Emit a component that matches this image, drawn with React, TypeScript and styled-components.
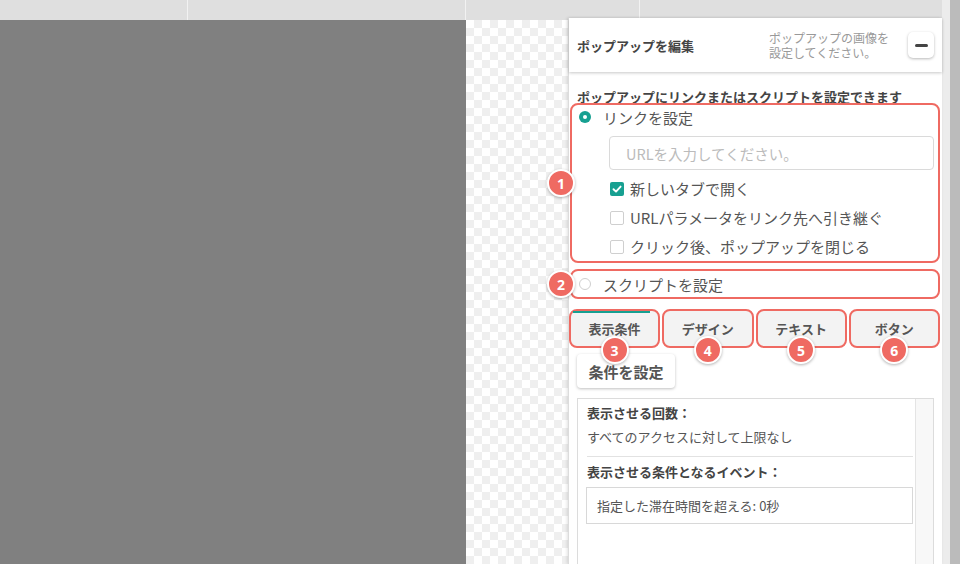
import styled, { createGlobalStyle, css } from "styled-components";

const GlobalStyle = createGlobalStyle`
  html, body {
    margin: 0;
    padding: 0;
    overflow: hidden;
  }
  body {
    font-family: "Noto Sans CJK JP", "Noto Sans", sans-serif;
    color: #555;
  }
  * {
    box-sizing: border-box;
  }
`;

const RED = "#ef6a62";
const TEAL = "#17a091";

const Page = styled.div`
  display: flex;
  width: 960px;
  height: 564px;
  overflow: hidden;
`;

const Workspace = styled.div`
  display: flex;
  flex-direction: column;
  width: 942px;
`;

const TopBar = styled.div`
  display: flex;
  height: 20px;
  background: #dfdfdf;
`;

const TopSegment = styled.div<{ w: number }>`
  width: ${(p) => p.w}px;
  border-right: 1px solid #f2f2f2;
  &:last-child {
    flex: 1;
    border-right: none;
  }
`;

const Main = styled.div`
  display: flex;
  flex: 1;
  min-height: 0;
`;

const Canvas = styled.div`
  width: 466px;
  background: #808080;
`;

const Checker = styled.div`
  flex: 1;
  display: flex;
  padding-left: 102px;
  background: conic-gradient(#efefef 25%, #fff 0 50%, #efefef 0 75%, #fff 0) 0 0 / 16px 16px;
`;

const ScrollStrip = styled.div`
  width: 8px;
  background: #ececec;
`;

const ScrollEdge = styled.div`
  width: 10px;
  background: #bbbbbb;
`;

const Panel = styled.div`
  position: relative;
  z-index: 1;
  margin-top: -2px;
  width: 374px;
  background: #fff;
  border-left: 1px solid #dcdcdc;
  box-shadow: -1px 0 3px rgba(0, 0, 0, 0.12);
  display: flex;
  flex-direction: column;
`;

const Header = styled.div`
  display: flex;
  align-items: center;
  height: 54px;
  padding: 0 8px 0 8px;
  box-shadow: 0 1px 3px rgba(0, 0, 0, 0.22);
`;

const Title = styled.div`
  flex: 1;
  font-size: 13px;
  font-weight: 700;
  color: #444;
`;

const HeaderNote = styled.div`
  font-size: 12px;
  line-height: 15px;
  color: #999;
  margin-right: 19px;
`;

const MinusButton = styled.button`
  width: 26px;
  height: 26px;
  border: none;
  border-radius: 5px;
  background: #fff;
  box-shadow: 0 1px 3px rgba(0, 0, 0, 0.28);
  display: flex;
  align-items: center;
  justify-content: center;
  padding: 0;
  &::after {
    content: "";
    width: 13px;
    height: 3px;
    border-radius: 2px;
    background: #444;
  }
`;

const Body = styled.div`
  flex: 1;
  display: flex;
  flex-direction: column;
  padding: 17px 8px 0 8px;
  min-height: 0;
`;

const Intro = styled.div`
  font-size: 13px;
  line-height: 15px;
  font-weight: 700;
  color: #444;
  margin-bottom: -1px;
`;

const Highlight = styled.div<{ gap?: number }>`
  position: relative;
  margin: ${(p) => p.gap ?? 0}px -6px 0 -7px;
  border: 2px solid ${RED};
  border-radius: 8px;
  padding: 0 4px 0 7px;
`;

const Badge = styled.span<{ under?: boolean }>`
  position: absolute;
  width: 28px;
  height: 28px;
  border-radius: 50%;
  background: ${RED};
  border: 2px solid #fff;
  box-shadow: 0 1px 3px rgba(0, 0, 0, 0.3);
  color: #fff;
  font-family: "Noto Sans", "Liberation Sans", sans-serif;
  font-size: 14px;
  font-weight: 700;
  display: flex;
  align-items: center;
  justify-content: center;
  z-index: 2;
  ${(p) =>
    p.under
      ? css`
          left: 50%;
          bottom: -18px;
          transform: translateX(-50%);
        `
      : css`
          left: -25px;
          top: 50%;
          transform: translateY(-50%);
        `}
`;

const RadioRow = styled.label<{ h: number }>`
  display: flex;
  align-items: center;
  height: ${(p) => p.h}px;
  gap: 12px;
  font-size: 15px;
  color: #555;
`;

const Radio = styled.span<{ on?: boolean }>`
  width: 12px;
  height: 12px;
  border-radius: 50%;
  flex-shrink: 0;
  display: flex;
  align-items: center;
  justify-content: center;
  ${(p) =>
    p.on
      ? css`
          background: ${TEAL};
          &::after {
            content: "";
            width: 4px;
            height: 4px;
            border-radius: 50%;
            background: #fff;
          }
        `
      : css`
          border: 1px solid #cfcfcf;
          background: #fff;
        `}
`;

const LinkOptions = styled.div`
  padding-left: 30px;
  display: flex;
  flex-direction: column;
`;

const UrlInput = styled.div`
  margin-top: 7px;
  height: 34px;
  border: 1px solid #dadada;
  border-radius: 4px;
  padding-left: 16px;
  display: flex;
  align-items: center;
  font-size: 14.5px;
  color: #bbb;
`;

const CheckList = styled.div`
  margin-top: 4px;
`;

const CheckRow = styled.label`
  display: flex;
  align-items: center;
  gap: 6px;
  height: 29px;
  padding-left: 1px;
  font-size: 15px;
  color: #555;
`;

const Box = styled.span<{ on?: boolean }>`
  width: 14px;
  height: 14px;
  border-radius: 2px;
  flex-shrink: 0;
  display: flex;
  align-items: center;
  justify-content: center;
  ${(p) =>
    p.on
      ? css`
          background: ${TEAL};
        `
      : css`
          border: 1px solid #cfcfcf;
          background: #fff;
        `}
`;

const Tabs = styled.div`
  display: flex;
  gap: 2px;
  margin: 10px -6px 0 -8px;
`;

const Tab = styled.div<{ active?: boolean }>`
  position: relative;
  flex: 1;
  height: 39px;
  border: 2px solid ${RED};
  border-radius: 8px;
  background: #f3f3f3;
  display: flex;
  align-items: center;
  justify-content: center;
  font-size: 13px;
  font-weight: 700;
  color: #555;
  ${(p) =>
    p.active &&
    css`
      &::before {
        content: "";
        position: absolute;
        left: 2px;
        right: 8px;
        top: 0;
        height: 2px;
        background: ${TEAL};
      }
    `}
`;

const ConditionButton = styled.button`
  align-self: flex-start;
  margin-top: 6px;
  height: 34px;
  width: 98px;
  border: none;
  border-radius: 4px;
  background: #fff;
  box-shadow: 0 1px 3px rgba(0, 0, 0, 0.25);
  font-family: inherit;
  font-size: 15px;
  font-weight: 700;
  color: #555;
  padding: 0;
`;

const Conditions = styled.div`
  margin-top: 10px;
  flex: 1;
  border: 1px solid #dcdcdc;
  border-bottom: none;
  display: grid;
  grid-template-columns: 1fr 18px;
`;

const ConditionContent = styled.div`
  padding: 5px 2px 0 9px;
`;

const Track = styled.div`
  background: #f8f8f8;
  border-left: 1px solid #e4e4e4;
`;

const Label = styled.div<{ gap?: number }>`
  font-size: 13px;
  line-height: 18px;
  font-weight: 700;
  color: #444;
  margin-top: ${(p) => p.gap ?? 0}px;
`;

const Value = styled.div`
  font-size: 13px;
  line-height: 18px;
  color: #555;
  margin-top: 6px;
`;

const Divider = styled.hr`
  border: none;
  border-top: 1px solid #e2e2e2;
  margin: 10px 0 0 0;
`;

const EventBox = styled.div`
  margin: 6px 0 0 -1px;
  height: 37px;
  border: 1px solid #d8d8d8;
  padding-left: 10px;
  display: flex;
  align-items: center;
  font-size: 13px;
  color: #555;
`;

const Check = () => (
  <svg width="10" height="10" viewBox="0 0 10 10">
    <path d="M1.5 5.2 L4 7.6 L8.6 2.6" fill="none" stroke="#fff" strokeWidth="1.9" strokeLinecap="round" strokeLinejoin="round" />
  </svg>
);

const tabs = ["表示条件", "デザイン", "テキスト", "ボタン"];

export default function App() {
  return (
    <Page>
      <GlobalStyle />
      <Workspace>
        <TopBar>
          <TopSegment w={188} />
          <TopSegment w={278} />
          <TopSegment w={174} />
          <TopSegment w={302} />
        </TopBar>
        <Main>
          <Canvas />
          <Checker>
            <Panel>
              <Header>
                <Title>ポップアップを編集</Title>
                <HeaderNote>
                  ポップアップの画像を
                  <br />
                  設定してください。
                </HeaderNote>
                <MinusButton aria-label="折りたたむ" />
              </Header>
              <Body>
                <Intro>ポップアップにリンクまたはスクリプトを設定できます</Intro>
                <Highlight>
                  <Badge>1</Badge>
                  <RadioRow h={24}>
                    <Radio on />
                    リンクを設定
                  </RadioRow>
                  <LinkOptions>
                    <UrlInput>URLを入力してください。</UrlInput>
                    <CheckList>
                      <CheckRow>
                        <Box on>
                          <Check />
                        </Box>
                        新しいタブで開く
                      </CheckRow>
                      <CheckRow>
                        <Box />
                        URLパラメータをリンク先へ引き継ぐ
                      </CheckRow>
                      <CheckRow>
                        <Box />
                        クリック後、ポップアップを閉じる
                      </CheckRow>
                    </CheckList>
                  </LinkOptions>
                </Highlight>
                <Highlight gap={6}>
                  <Badge>2</Badge>
                  <RadioRow h={26}>
                    <Radio />
                    スクリプトを設定
                  </RadioRow>
                </Highlight>
                <Tabs>
                  {tabs.map((t, i) => (
                    <Tab key={t} active={i === 0}>
                      {t}
                      <Badge under>{i + 3}</Badge>
                    </Tab>
                  ))}
                </Tabs>
                <ConditionButton>条件を設定</ConditionButton>
                <Conditions>
                  <ConditionContent>
                    <Label>表示させる回数：</Label>
                    <Value>すべてのアクセスに対して上限なし</Value>
                    <Divider />
                    <Label gap={6}>表示させる条件となるイベント：</Label>
                    <EventBox>指定した滞在時間を超える: 0秒</EventBox>
                  </ConditionContent>
                  <Track />
                </Conditions>
              </Body>
            </Panel>
          </Checker>
        </Main>
      </Workspace>
      <ScrollStrip />
      <ScrollEdge />
    </Page>
  );
}
